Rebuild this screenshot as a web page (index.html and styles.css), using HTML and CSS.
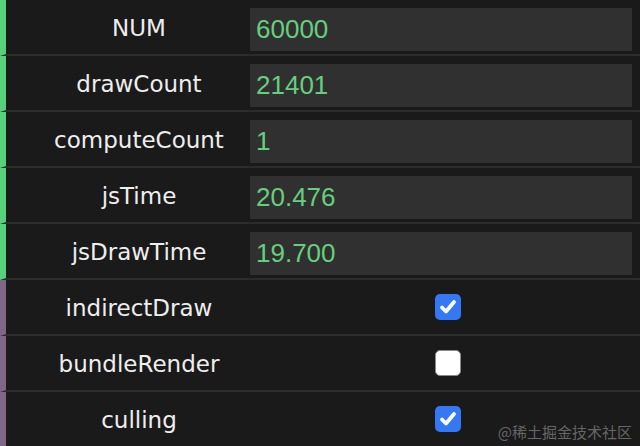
FILE: index.html
```html
<!DOCTYPE html>
<html lang="en">
<head>
    <meta charset="UTF-8">
    <title>GUI</title>
    <link rel="stylesheet" href="styles.css">
</head>
<body>
    <div class="gui">
        <div class="row number">
            <div class="label">NUM</div>
            <div class="value"><div class="field">60000</div></div>
        </div>
        <div class="row number">
            <div class="label">drawCount</div>
            <div class="value"><div class="field">21401</div></div>
        </div>
        <div class="row number">
            <div class="label">computeCount</div>
            <div class="value"><div class="field">1</div></div>
        </div>
        <div class="row number">
            <div class="label">jsTime</div>
            <div class="value"><div class="field">20.476</div></div>
        </div>
        <div class="row number">
            <div class="label">jsDrawTime</div>
            <div class="value"><div class="field">19.700</div></div>
        </div>
        <div class="row boolean">
            <div class="label">indirectDraw</div>
            <div class="value"><span class="check on"><svg viewBox="0 0 26 26" width="26" height="26"><path d="M7 13.5 L11 17.5 L19 8" fill="none" stroke="#fff" stroke-width="3.8" stroke-linecap="round" stroke-linejoin="round"/></svg></span></div>
        </div>
        <div class="row boolean">
            <div class="label">bundleRender</div>
            <div class="value"><span class="check"></span></div>
        </div>
        <div class="row boolean">
            <div class="label">culling</div>
            <div class="value"><span class="check on"><svg viewBox="0 0 26 26" width="26" height="26"><path d="M7 13.5 L11 17.5 L19 8" fill="none" stroke="#fff" stroke-width="3.8" stroke-linecap="round" stroke-linejoin="round"/></svg></span></div>
        </div>
    </div>
    <div class="watermark">@稀土掘金技术社区</div>
</body>
</html>
```
FILE: styles.css
```css
body {
    margin: 0;
    background: #1a1a1a;
    height: 446px;
    overflow: hidden;
    position: relative;
}

.gui {
    display: flex;
    flex-direction: column;
}

.row {
    display: flex;
    height: 54px;
    border-bottom: 2px solid #2c2c2c;
    border-left: 6px solid #58d27a;
    background: #1a1a1a;
}

.row.boolean {
    border-left-color: #806787;
}

.label {
    width: 222px;
    padding-left: 22px;
    padding-top: 2px;
    display: flex;
    align-items: center;
    justify-content: center;
    font-family: "DejaVu Sans", sans-serif;
    font-size: 23px;
    color: #eeeeee;
}

.value {
    flex: 1;
    display: flex;
    align-items: center;
    padding-right: 8px;
}

.number .value {
    align-items: flex-start;
    padding-top: 8px;
}

.field {
    flex: 1;
    height: 43px;
    background: #303030;
    color: #66cf7d;
    font-family: "Liberation Sans", Arial, sans-serif;
    font-size: 26px;
    line-height: 43px;
    padding-left: 6px;
}

.check {
    margin-left: 185px;
    width: 26px;
    height: 26px;
    box-sizing: border-box;
    border-radius: 5px;
    background: #ffffff;
    border: 1.5px solid #8a8a8a;
    display: flex;
}

.check.on {
    background: #3478f6;
    border: none;
}

.watermark {
    position: absolute;
    right: 8px;
    bottom: 4px;
    font-family: "Noto Sans CJK SC", sans-serif;
    font-size: 15px;
    color: rgba(200, 200, 200, 0.45);
}
```
